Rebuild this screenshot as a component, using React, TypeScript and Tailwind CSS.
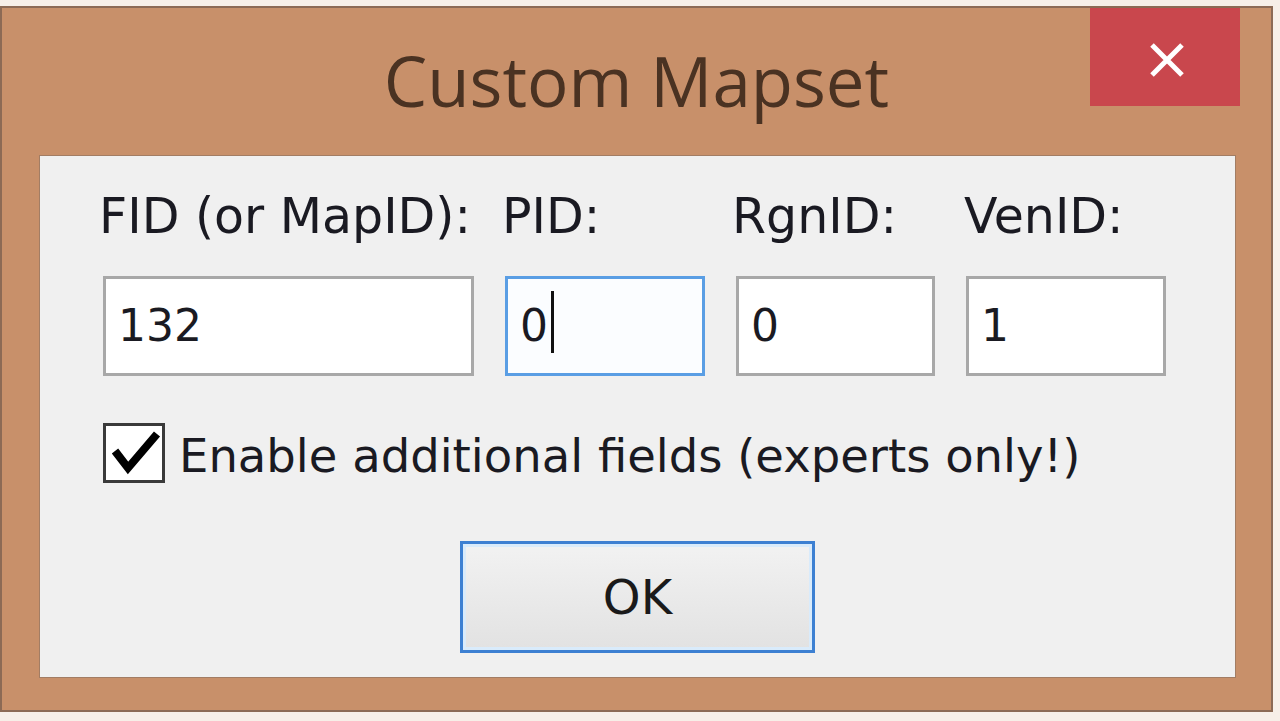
import React from 'react';

const fields = [
  { label: 'FID (or MapID):', value: '132', width: 'w-[371px]', labelShift: 'ml-[-4px]', focused: false },
  { label: 'PID:', value: '0', width: 'w-[200px]', labelShift: 'ml-[-3px]', focused: true },
  { label: 'RgnID:', value: '0', width: 'w-[199px]', labelShift: 'ml-[-4px]', focused: false },
  { label: 'VenID:', value: '1', width: 'w-[200px]', labelShift: 'ml-[-2px]', focused: false },
];

const App: React.FC = () => {
  return (
    <div className="w-[1280px] h-[721px] overflow-hidden bg-[#f7efe8] pt-[6px]">
      {/* Window frame */}
      <div className="relative w-[1273px] h-[706px] border-2 border-[#8c6a55] bg-[#c8906a] flex flex-col">
        {/* Title bar */}
        <div className="h-[147px] pt-[32px] text-center">
          <span
            className="text-[69px] leading-[80px] text-[#4a3222]"
            style={{ fontFamily: '"Open Sans", "Noto Sans", sans-serif' }}
          >
            Custom Mapset
          </span>
        </div>

        {/* Close button */}
        <div className="absolute top-[0px] right-[31px] w-[150px] h-[98px] bg-[#c9474d] flex items-center justify-center">
          <svg width="40" height="36" viewBox="0 0 40 36" className="mt-[6px] ml-[4px]">
            <path d="M5 3 L35 33 M35 3 L5 33" stroke="#ffffff" strokeWidth="5" strokeLinecap="butt" />
          </svg>
        </div>

        {/* Client area */}
        <div
          className="ml-[37px] mr-[35px] mb-[32px] flex-1 bg-[#f0f0f0] border border-[#a27d64] pl-[63px] pt-[32px] text-[#1a1a22]"
          style={{ fontFamily: '"DejaVu Sans", Verdana, sans-serif' }}
        >
          <div className="flex gap-[31px]">
            {fields.map((f) => (
              <div key={f.label} className={`flex flex-col ${f.width}`}>
                <div className={`text-[49px] leading-[58px] whitespace-nowrap ${f.labelShift}`}>{f.label}</div>
                <div
                  className={`mt-[30px] h-[100px] border-[3px] flex items-center pl-[12px] text-[44px] ${
                    f.focused ? 'border-[#5a9ee4] bg-[#fbfdff]' : 'border-[#a8a8a8] bg-white'
                  }`}
                >
                  <span>{f.value}</span>
                  {f.focused && <span className="ml-[3px] mt-[-8px] w-[3px] h-[62px] bg-[#111]" />}
                </div>
              </div>
            ))}
          </div>

          {/* Checkbox */}
          <div className="mt-[46px] flex items-center">
            <div className="w-[62px] h-[60px] border-[3px] border-[#3a3a3a] bg-white">
              <svg width="56" height="54" viewBox="0 0 56 54">
                <polyline points="9,25 22,42 51,8" fill="none" stroke="#000" strokeWidth="8" strokeLinejoin="miter" />
              </svg>
            </div>
            <span className="ml-[14px] mt-[6px] text-[46.5px] leading-[56px] whitespace-nowrap">
              Enable additional fields (experts only!)
            </span>
          </div>

          {/* OK button */}
          <div className="mt-[57px] flex justify-center pr-[63px]">
            <div className="w-[355px] h-[112px] border-[3px] border-[#3d80d2] bg-gradient-to-b from-[#f2f2f2] to-[#e2e2e2] shadow-[inset_0_0_0_3px_#d9ebfb] flex items-center justify-center text-[48px] text-[#1a1a1a]">
              OK
            </div>
          </div>
        </div>
      </div>
    </div>
  );
};

export default App;
